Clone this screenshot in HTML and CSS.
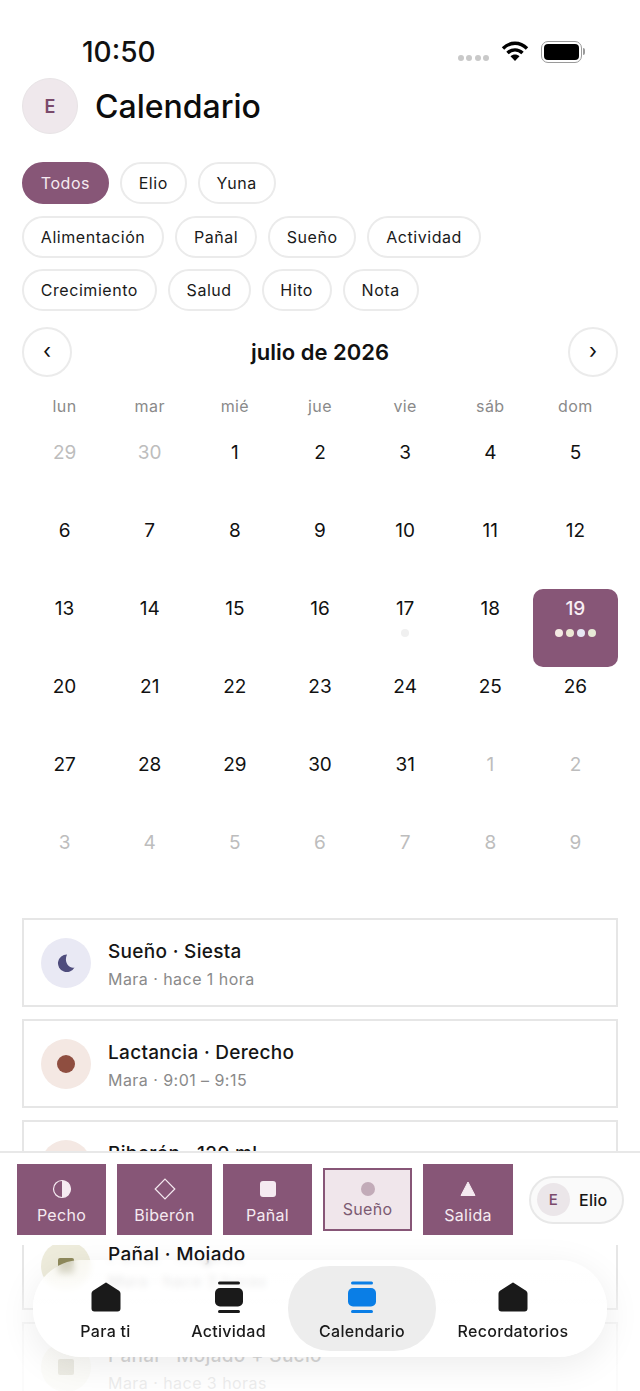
FILE: index.html
```html
<!DOCTYPE html>
<html lang="es">
<head>
    <meta charset="utf-8">
    <title>Calendario</title>
    <link rel="stylesheet" href="styles.css">
</head>
<body>
<div class="screen">
    <div class="status-bar">
        <span class="status-time">10:50</span>
        <div class="status-icons">
            <span class="signal"><i></i><i></i><i></i><i></i></span>
            <svg class="wifi" width="28" height="22" viewBox="0 0 28 22">
                <path d="M2 8.500C9 1.500 19 1.500 26 8.500M6.500 13C10.800 8.800 17.200 8.800 21.500 13" fill="none" stroke="#000" stroke-width="3.400"/>
                <path d="M9.500 16.200C12 13.800 16 13.800 18.500 16.200L14 21Z" fill="#000"/>
            </svg>
            <span class="battery"><span class="battery-fill"></span></span>
        </div>
    </div>

    <header class="page-header">
        <div class="avatar">E</div>
        <h1>Calendario</h1>
    </header>

    <div class="filters">
        <div class="chip-row">
            <span class="chip active">Todos</span>
            <span class="chip">Elio</span>
            <span class="chip">Yuna</span>
        </div>
        <div class="chip-row">
            <span class="chip">Alimentación</span>
            <span class="chip">Pañal</span>
            <span class="chip">Sueño</span>
            <span class="chip">Actividad</span>
        </div>
        <div class="chip-row">
            <span class="chip">Crecimiento</span>
            <span class="chip">Salud</span>
            <span class="chip">Hito</span>
            <span class="chip">Nota</span>
        </div>
    </div>

    <div class="month-nav">
        <button class="month-btn">‹</button>
        <div class="month-title">julio de 2026</div>
        <button class="month-btn">›</button>
    </div>

    <div class="weekdays">
        <span>lun</span><span>mar</span><span>mié</span><span>jue</span><span>vie</span><span>sáb</span><span>dom</span>
    </div>

    <div class="calendar">
        <div class="day muted">29</div><div class="day muted">30</div><div class="day">1</div><div class="day">2</div><div class="day">3</div><div class="day">4</div><div class="day">5</div>
        <div class="day">6</div><div class="day">7</div><div class="day">8</div><div class="day">9</div><div class="day">10</div><div class="day">11</div><div class="day">12</div>
        <div class="day">13</div><div class="day">14</div><div class="day">15</div><div class="day">16</div>
        <div class="day">17<div class="dots"><i class="dot-faint"></i></div></div>
        <div class="day">18</div>
        <div class="day selected">19<div class="dots"><i class="dot-a"></i><i class="dot-b"></i><i class="dot-c"></i><i class="dot-d"></i></div></div>
        <div class="day">20</div><div class="day">21</div><div class="day">22</div><div class="day">23</div><div class="day">24</div><div class="day">25</div><div class="day">26</div>
        <div class="day">27</div><div class="day">28</div><div class="day">29</div><div class="day">30</div><div class="day">31</div><div class="day muted">1</div><div class="day muted">2</div>
        <div class="day muted">3</div><div class="day muted">4</div><div class="day muted">5</div><div class="day muted">6</div><div class="day muted">7</div><div class="day muted">8</div><div class="day muted">9</div>
    </div>

    <div class="entries">
        <div class="entry">
            <div class="entry-icon sleep">
                <svg width="22" height="22" viewBox="0 0 22 22"><path d="M12 2.500A8.800 8.800 0 1 0 19.500 15.500C14 17 8.500 10 12 2.500Z" fill="#4f4d7d"/></svg>
            </div>
            <div class="entry-text">
                <div class="entry-title">Sueño · Siesta</div>
                <div class="entry-sub">Mara · hace 1 hora</div>
            </div>
        </div>
        <div class="entry">
            <div class="entry-icon feed"><span class="entry-dot"></span></div>
            <div class="entry-text">
                <div class="entry-title">Lactancia · Derecho</div>
                <div class="entry-sub">Mara · 9:01 – 9:15</div>
            </div>
        </div>
        <div class="entry">
            <div class="entry-icon feed"><span class="entry-dot"></span></div>
            <div class="entry-text">
                <div class="entry-title">Biberón · 120 ml</div>
                <div class="entry-sub">Mara · hace 2 horas</div>
            </div>
        </div>
        <div class="entry">
            <div class="entry-icon diaper"><span class="entry-square"></span></div>
            <div class="entry-text">
                <div class="entry-title">Pañal · Mojado</div>
                <div class="entry-sub">Mara · hace 2 horas</div>
            </div>
        </div>
        <div class="entry">
            <div class="entry-icon diaper"><span class="entry-square"></span></div>
            <div class="entry-text">
                <div class="entry-title">Pañal · Mojado + Sucio</div>
                <div class="entry-sub">Mara · hace 3 horas</div>
            </div>
        </div>
    </div>

    <div class="dock">
        <div class="quick-bar">
            <div class="quick-btn">
                <svg width="20" height="20" viewBox="0 0 20 20"><circle cx="10" cy="10" r="8.500" fill="none" stroke="#f5eaf1" stroke-width="1.200"/><path d="M10 1.500A8.500 8.500 0 0 1 10 18.500Z" fill="#f5eaf1"/></svg>
                <span>Pecho</span>
            </div>
            <div class="quick-btn biberon">
                <svg width="22" height="22" viewBox="0 0 22 22"><path d="M11 1.200L20.800 11L11 20.800L1.200 11Z" fill="none" stroke="#f5eaf1" stroke-width="1.200"/></svg>
                <span>Biberón</span>
            </div>
            <div class="quick-btn">
                <svg width="20" height="20" viewBox="0 0 20 20"><rect x="2" y="2" width="16" height="16" rx="3" fill="#f5eaf1"/></svg>
                <span>Pañal</span>
            </div>
            <div class="quick-btn pressed">
                <svg width="18" height="18" viewBox="0 0 18 18"><circle cx="9" cy="9" r="7" fill="#c2abb8"/></svg>
                <span>Sueño</span>
            </div>
            <div class="quick-btn salida">
                <svg width="20" height="20" viewBox="0 0 20 20"><path d="M10 3L17 16.500H3Z" fill="#f5eaf1" stroke="#f5eaf1" stroke-linejoin="round"/></svg>
                <span>Salida</span>
            </div>
            <div class="child-chip">
                <span class="child-avatar">E</span>
                <span>Elio</span>
            </div>
        </div>

        <div class="nav-fade">
            <nav class="tabbar">
                <div class="tab">
                    <svg width="30" height="32" viewBox="0 -1 30 32"><path d="M15 1.500L27.500 9.500C28.300 10 28.500 10.500 28.500 11.500V26.500C28.500 28 28 28.500 26.500 28.500H3.500C2 28.500 1.500 28 1.500 26.500V11.500C1.500 10.500 1.700 10 2.500 9.500Z" fill="#1a1a1a" stroke="#1a1a1a" stroke-width="2" stroke-linejoin="round"/></svg>
                    <span>Para ti</span>
                </div>
                <div class="tab">
                    <svg width="30" height="32" viewBox="0 0 30 32"><rect x="4" y="0.500" width="22" height="3" rx="1.500" fill="#1a1a1a"/><rect x="1" y="7" width="28" height="18.500" rx="5" fill="#1a1a1a"/><rect x="4" y="29" width="22" height="3" rx="1.500" fill="#1a1a1a"/></svg>
                    <span>Actividad</span>
                </div>
                <div class="tab current">
                    <svg width="30" height="32" viewBox="0 0 30 32"><rect x="4" y="0.500" width="22" height="3" rx="1.500" fill="#0a7ee6"/><rect x="1" y="7" width="28" height="18.500" rx="5" fill="#0a7ee6"/><rect x="4" y="29" width="22" height="3" rx="1.500" fill="#0a7ee6"/></svg>
                    <span>Calendario</span>
                </div>
                <div class="tab">
                    <svg width="30" height="32" viewBox="0 -1 30 32"><path d="M15 1.500L27.500 9.500C28.300 10 28.500 10.500 28.500 11.500V26.500C28.500 28 28 28.500 26.500 28.500H3.500C2 28.500 1.500 28 1.500 26.500V11.500C1.500 10.500 1.700 10 2.500 9.500Z" fill="#1a1a1a" stroke="#1a1a1a" stroke-width="2" stroke-linejoin="round"/></svg>
                    <span>Recordatorios</span>
                </div>
            </nav>
        </div>
    </div>
</div>
</body>
</html>
```

FILE: styles.css
```css
* {
    box-sizing: border-box;
}
body {
    margin: 0;
    font-family: Inter, "Noto Sans", sans-serif;
    background-color: #fff;
    color: #111;
}
.screen {
    position: relative;
    height: 1391px;
    overflow: hidden;
}

/* status bar */
.status-bar {
    display: flex;
    justify-content: space-between;
    height: 78px;
    padding: 36px 56px 0 82px;
}
.status-time {
    font-size: 28px;
    font-weight: 500;
    line-height: 32px;
    color: #111;
}
.status-icons {
    display: flex;
    align-items: flex-start;
    padding-top: 4px;
}
.signal {
    display: flex;
    gap: 2.300px;
    margin-top: 15px;
    margin-right: 12px;
}
.signal i {
    width: 6px;
    height: 6px;
    border-radius: 50%;
    background-color: #c9c9c9;
}
.wifi {
    margin-right: 12px;
}
.battery {
    position: relative;
    width: 41px;
    height: 22px;
    padding: 2px;
    margin-top: 1px;
    margin-right: 2px;
    border: 1.500px solid #9a9a9a;
    border-radius: 7px;
}
.battery::after {
    content: "";
    position: absolute;
    right: -4px;
    top: 6px;
    width: 2px;
    height: 7px;
    background-color: #9a9a9a;
    border-radius: 0 2px 2px 0;
}
.battery-fill {
    display: block;
    height: 100%;
    background-color: #000;
    border-radius: 4px;
}

/* header */
.page-header {
    display: flex;
    align-items: center;
    gap: 17px;
    padding: 0 22px;
    height: 56px;
}
.avatar {
    width: 56px;
    height: 56px;
    border-radius: 50%;
    background-color: #efe8ec;
    border: 1px solid #e8e4e6;
    color: #7a4a6b;
    font-size: 18px;
    font-weight: 600;
    display: flex;
    align-items: center;
    justify-content: center;
}
.page-header h1 {
    margin: 0;
    font-size: 32px;
    font-weight: 500;
    color: #0c0c0c;
}

/* filter chips */
.filters {
    display: flex;
    flex-direction: column;
    gap: 11.500px;
    padding: 28px 22px 0;
}
.chip-row {
    display: flex;
    gap: 11px;
}
.chip {
    height: 42px;
    padding: 0 16.800px;
    border: 2px solid #ebebeb;
    border-radius: 21px;
    font-size: 16px;
    font-weight: 430;
    letter-spacing: 0.55px;
    line-height: 38px;
    color: #1a1a1a;
    background-color: #fff;
}
.chip.active {
    background-color: #875677;
    border-color: #875677;
    color: #f5eaf1;
}

/* month header */
.month-nav {
    display: flex;
    align-items: center;
    justify-content: space-between;
    padding: 0 22px;
    margin-top: 16px;
}
.month-btn {
    width: 50px;
    height: 50px;
    border: 2px solid #ebebeb;
    border-radius: 50%;
    background-color: #fff;
    font-family: inherit;
    font-size: 21px;
    line-height: 1;
    color: #111;
    padding: 0 0 3px;
}
.month-title {
    font-size: 22px;
    font-weight: 600;
    color: #111;
}
.weekdays {
    display: grid;
    grid-template-columns: repeat(7, 1fr);
    padding: 0 22px;
    margin-top: 17px;
    text-align: center;
    font-size: 16px;
    letter-spacing: 0.4px;
    line-height: 24px;
    color: #8a8a8a;
}

/* calendar grid */
.calendar {
    display: grid;
    grid-template-columns: repeat(7, 1fr);
    grid-auto-rows: 78px;
    padding: 0 22px;
    margin-top: 15px;
}
.day {
    padding-top: 8px;
    text-align: center;
    font-size: 19px;
    line-height: 24px;
    color: #111;
}
.day.muted {
    color: #bdbdbd;
}
.day.selected {
    background-color: #875677;
    border-radius: 10px;
    color: #f8eef4;
    font-weight: 500;
}
.dots {
    display: flex;
    justify-content: center;
    gap: 3px;
    margin-top: 8px;
}
.dots i {
    width: 8px;
    height: 8px;
    border-radius: 50%;
}
.dots .dot-faint {
    background-color: #f0f0f0;
}
.dot-a {
    background-color: #f4e9e3;
}
.dot-b {
    background-color: #ece8d4;
}
.dot-c {
    background-color: #e7e7f4;
}
.dot-d {
    background-color: #e6e9d6;
}

/* entries */
.entries {
    display: flex;
    flex-direction: column;
    gap: 12px;
    padding: 0 22px;
    margin-top: 17px;
}
.entry {
    display: flex;
    align-items: center;
    gap: 17px;
    height: 89px;
    padding: 0 17px;
    border: 2px solid #e6e6e6;
    background-color: #fff;
    flex-shrink: 0;
}
.entry-icon {
    width: 50px;
    height: 50px;
    border-radius: 50%;
    display: flex;
    align-items: center;
    justify-content: center;
    flex-shrink: 0;
}
.entry-icon.sleep {
    background-color: #e9e9f4;
}
.entry-icon.feed {
    background-color: #f4e8e3;
}
.entry-icon.diaper {
    background-color: #eeecdc;
}
.entry-dot {
    width: 18px;
    height: 18px;
    border-radius: 50%;
    background-color: #8f4e40;
}
.entry-square {
    width: 16px;
    height: 16px;
    border-radius: 2px;
    background-color: #8f8a5c;
}
.entry-text {
    padding-top: 4px;
}
.entry-title {
    font-size: 19px;
    font-weight: 500;
    letter-spacing: 0.3px;
    line-height: 26px;
    color: #151515;
}
.entry-sub {
    font-size: 16px;
    letter-spacing: 0.45px;
    line-height: 22px;
    margin-top: 3px;
    color: #8a8a8a;
}

/* bottom dock */
.dock {
    position: absolute;
    left: 0;
    right: 0;
    bottom: 0;
}
.quick-bar {
    display: flex;
    align-items: center;
    gap: 11px;
    height: 94px;
    padding: 1px 16px 0 17px;
    background-color: #fff;
    border-top: 2px solid #e8e8e8;
}
.quick-btn {
    display: flex;
    flex-direction: column;
    align-items: center;
    gap: 5px;
    width: 89px;
    height: 71px;
    padding-top: 15px;
    background-color: #875677;
    color: #f5eaf1;
    font-size: 16px;
    letter-spacing: 0.3px;
    line-height: 22px;
}
.quick-btn.biberon {
    width: 95px;
    padding-top: 14px;
    gap: 4px;
}
.quick-btn.salida {
    width: 90px;
}
.quick-btn.pressed {
    height: 63px;
    padding-top: 10px;
    gap: 0;
    background-color: #f0e6eb;
    border: 2px solid #875677;
    color: #7c5a72;
}
.child-chip {
    display: flex;
    align-items: center;
    gap: 9px;
    height: 48px;
    width: 95px;
    margin-left: 5px;
    padding: 0 6px;
    border: 2px solid #e8e8e8;
    border-radius: 24px;
    background-color: #fafafa;
    font-size: 16px;
    font-weight: 500;
    letter-spacing: 0.3px;
    color: #151515;
}
.child-avatar {
    width: 33px;
    height: 33px;
    border-radius: 50%;
    background-color: #ebe6e9;
    color: #7a4a6b;
    font-size: 15px;
    font-weight: 500;
    display: flex;
    align-items: center;
    justify-content: center;
}
.nav-fade {
    height: 146px;
    padding: 15px 33px 0;
    background: linear-gradient(to bottom, rgba(255, 255, 255, 0) 22%, rgba(255, 255, 255, 0.8) 60%, rgba(255, 255, 255, 0.85));
}
.tabbar {
    display: grid;
    grid-template-columns: 127px 119px 148px 154px;
    height: 97px;
    padding: 6px 17px 6px 9px;
    border-radius: 48px;
    background: linear-gradient(to bottom, rgba(255, 255, 255, 0.6), rgba(255, 255, 255, 0.95) 45%);
    backdrop-filter: blur(3px);
    box-shadow: 0 8px 36px rgba(0, 0, 0, 0.08);
}
.tab {
    display: flex;
    flex-direction: column;
    align-items: center;
    padding-top: 15px;
    border-radius: 42px;
    font-size: 16px;
    font-weight: 500;
    letter-spacing: 0.3px;
    color: #1a1a1a;
}
.tab span {
    margin-top: 7px;
    line-height: 22px;
}
.tab.current {
    background-color: #ededed;
}
```
